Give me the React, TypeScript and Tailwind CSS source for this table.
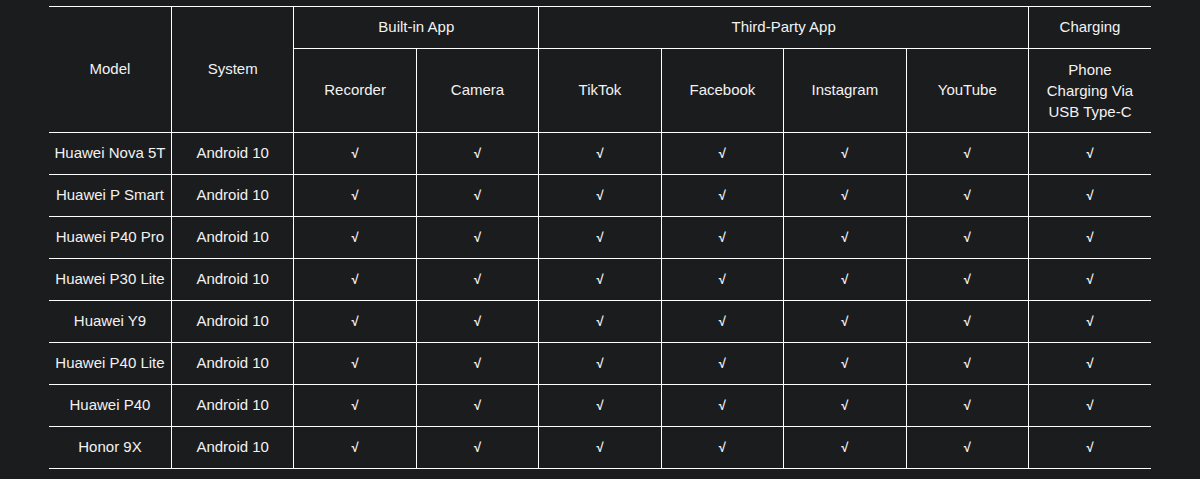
import React from "react";

const models = [
  "Huawei Nova 5T",
  "Huawei P Smart",
  "Huawei P40 Pro",
  "Huawei P30 Lite",
  "Huawei Y9",
  "Huawei P40 Lite",
  "Huawei P40",
  "Honor 9X",
];

export default function App() {
  return (
    <div
      className="w-[1200px] h-[479px] bg-[#1b1c1e] text-[#f2f2f2] pl-[49px] pt-[6px]"
      style={{ fontFamily: '"Liberation Sans", Arial, sans-serif' }}
    >
      <table className="table-fixed border-collapse w-[1102px] text-[15px] text-center">
        <thead>
          <tr className="h-[42px]">
            <th rowSpan={2} className="font-normal border border-white border-l-0">Model</th>
            <th rowSpan={2} className="font-normal border border-white">System</th>
            <th colSpan={2} className="font-normal border border-white">Built-in App</th>
            <th colSpan={4} className="font-normal border border-white">Third-Party App</th>
            <th className="font-normal border border-white border-r-0">Charging</th>
          </tr>
          <tr className="h-[84px]">
            <th className="font-normal border border-white">Recorder</th>
            <th className="font-normal border border-white">Camera</th>
            <th className="font-normal border border-white">TikTok</th>
            <th className="font-normal border border-white">Facebook</th>
            <th className="font-normal border border-white">Instagram</th>
            <th className="font-normal border border-white">YouTube</th>
            <th className="font-normal border border-white border-r-0 leading-[21px]">
              Phone
              <br />
              Charging Via
              <br />
              USB Type-C
            </th>
          </tr>
        </thead>
        <tbody>
          {models.map((m) => (
            <tr key={m} className="h-[42px]">
              <td className="border border-white border-l-0">{m}</td>
              <td className="border border-white">Android 10</td>
              {Array.from({ length: 6 }).map((_, i) => (
                <td key={i} className="border border-white text-[13px] font-bold">√</td>
              ))}
              <td className="border border-white border-r-0 text-[13px] font-bold">√</td>
            </tr>
          ))}
        </tbody>
      </table>
    </div>
  );
}
